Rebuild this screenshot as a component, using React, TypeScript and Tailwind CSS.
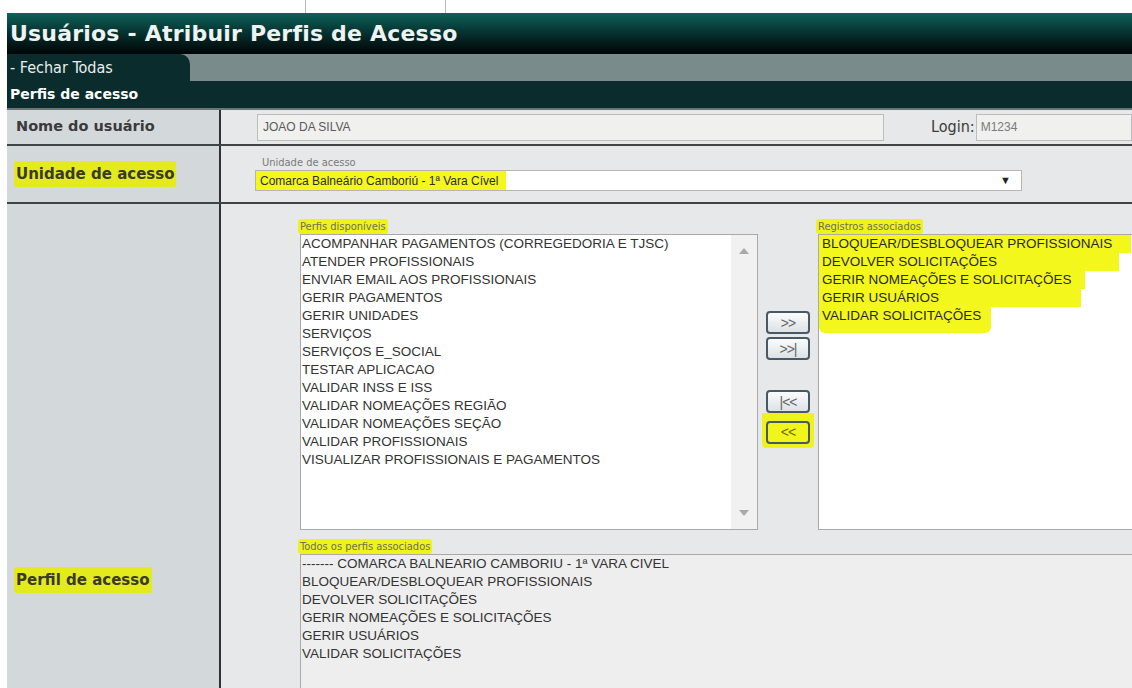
import React from "react";

const disponiveis = [
  "ACOMPANHAR PAGAMENTOS (CORREGEDORIA E TJSC)",
  "ATENDER PROFISSIONAIS",
  "ENVIAR EMAIL AOS PROFISSIONAIS",
  "GERIR PAGAMENTOS",
  "GERIR UNIDADES",
  "SERVIÇOS",
  "SERVIÇOS E_SOCIAL",
  "TESTAR APLICACAO",
  "VALIDAR INSS E ISS",
  "VALIDAR NOMEAÇÕES REGIÃO",
  "VALIDAR NOMEAÇÕES SEÇÃO",
  "VALIDAR PROFISSIONAIS",
  "VISUALIZAR PROFISSIONAIS E PAGAMENTOS",
];

// marker stroke width behind each associated entry
const associados = [
  { nome: "BLOQUEAR/DESBLOQUEAR PROFISSIONAIS", w: "w-[312px]" },
  { nome: "DEVOLVER SOLICITAÇÕES", w: "w-[300px]" },
  { nome: "GERIR NOMEAÇÕES E SOLICITAÇÕES", w: "w-[266px]" },
  { nome: "GERIR USUÁRIOS", w: "w-[262px]" },
  { nome: "VALIDAR SOLICITAÇÕES", w: "w-[172px]" },
];

const todos = [
  "------- COMARCA BALNEARIO CAMBORIU - 1ª VARA CIVEL",
  ...associados.map((a) => a.nome),
];

const cond = "font-['DejaVu_Sans_Condensed','DejaVu_Sans',sans-serif]";
const wide = "font-['DejaVu_Sans',sans-serif]";
const arial = "font-['Liberation_Sans',Arial,sans-serif]";

function Caption({ children }: { children: React.ReactNode }) {
  return (
    <div className={`${cond} text-[11px] leading-[15px] text-[#6f6f5a] bg-[#eef31c] rounded-[3px] px-[2px] -ml-[2px] w-fit`}>
      {children}
    </div>
  );
}

function Arrow({ up }: { up?: boolean }) {
  return (
    <svg width="10" height="6" viewBox="0 0 10 6" className="fill-[#a9a9a9]">
      {up ? <path d="M5 0L10 6H0z" /> : <path d="M0 0h10L5 6z" />}
    </svg>
  );
}

function MoveButton({ label, active }: { label: string; active?: boolean }) {
  return (
    <button
      type="button"
      className={`${arial} w-[44px] h-[23px] rounded-[4px] border-2 border-[#475866] text-[14px] leading-none tracking-[-1px] ${
        active
          ? "bg-[#f2f51a] text-[#6b6b20]"
          : "bg-gradient-to-b from-[#fbfbfb] to-[#dde2e6] text-[#666]"
      }`}
    >
      {label}
    </button>
  );
}

export default function App() {
  return (
    <div className="w-[1132px] h-[688px] overflow-hidden bg-white">
      {/* faint strip above the page header */}
      <div className="h-[13px] flex">
        <div className="w-[306px] border-r border-[#b8b8b8]" />
        <div className="w-[140px] border-r border-[#b8b8b8]" />
      </div>

      <div className="ml-[7px]">
        <div className="h-[41px] flex items-center pl-[3px] bg-gradient-to-b from-[#0e625b] via-[#06302e] to-[#010606]">
          <h1 className={`${wide} text-[22px] font-bold text-[#eef3f2] tracking-[0.2px]`}>
            Usuários - Atribuir Perfis de Acesso
          </h1>
        </div>

        <div className="h-[27px] flex bg-[#798b8b]">
          <div className={`${cond} w-[183px] rounded-tr-[10px] bg-[#0b2c2c] flex items-center pl-[3px] text-[16px] text-[#e9efee]`}>
            - Fechar Todas
          </div>
        </div>

        <div className={`${wide} h-[27px] flex items-center pl-[3px] bg-[#0b2c2c] text-[14px] font-bold text-white`}>
          Perfis de acesso
        </div>
        <div className="h-[2px] bg-[#6e7374]" />

        {/* Nome do usuário */}
        <div className="flex h-[36px] border-b-2 border-[#3e4344]">
          <div className={`${wide} w-[212px] shrink-0 bg-[#d3d8db] flex items-center pl-[9px] text-[14.5px] font-bold text-[#3a3a3a]`}>
            Nome do usuário
          </div>
          <div className="w-[2px] shrink-0 bg-[#2f3334]" />
          <div className="flex-1 bg-[#e6e8e9] flex items-center pl-[36px]">
            <div className={`${arial} w-[627px] shrink-0 h-[27px] border border-[#bdbdbd] bg-[#f0f0ee] flex items-center pl-[5px] text-[12px] text-[#5a5a5a]`}>
              JOAO DA SILVA
            </div>
            <span className={`${cond} ml-[47px] text-[16px] text-[#3a3a3a]`}>Login:</span>
            <div className={`${arial} ml-[1px] flex-1 h-[27px] border border-[#bdbdbd] bg-[#f0f0ee] flex items-center pl-[4px] text-[12px] text-[#7a7a7a]`}>
              M1234
            </div>
          </div>
        </div>

        {/* Unidade de acesso */}
        <div className="flex h-[58px] border-b-2 border-[#3e4344]">
          <div className="w-[212px] shrink-0 bg-[#d3d8db] flex items-center pl-[7px]">
            <span className={`${wide} text-[15px] font-bold text-[#3a3a2a] bg-[#e3ea1e] px-[2px] py-[2px] rounded-[2px]`}>
              Unidade de acesso
            </span>
          </div>
          <div className="w-[2px] shrink-0 bg-[#2f3334]" />
          <div className="flex-1 bg-[#e6e8e9] pl-[34px] pt-[10px]">
            <div className={`${cond} text-[11px] leading-[14px] text-[#7a7a7a] pl-[7px]`}>Unidade de acesso</div>
            <div className="w-[767px] h-[21px] border border-[#b5b5b5] bg-white flex items-center justify-between pr-[10px]">
              <span className={`${arial} text-[12px] text-[#2c2c2c] bg-[#f4f71c] pl-[4px] pr-[8px] h-full flex items-center`}>
                Comarca Balneário Camboriú - 1ª Vara Cível
              </span>
              <span className="text-[11px] text-[#222]">▼</span>
            </div>
          </div>
        </div>

        {/* Perfil de acesso */}
        <div className="flex h-[752px]">
          <div className="w-[212px] shrink-0 bg-[#d3d8db] flex items-center pl-[7px]">
            <span className={`${wide} text-[15px] font-bold text-[#3a3a2a] bg-[#e3ea1e] px-[2px] py-[2px] rounded-[2px]`}>
              Perfil de acesso
            </span>
          </div>
          <div className="w-[2px] shrink-0 bg-[#2f3334]" />
          <div className="flex-1 bg-[#e6e8e9] pl-[79px] pt-[15px]">
            <div className="flex">
              <div className="w-[458px] shrink-0">
                <Caption>Perfis disponíveis</Caption>
                <div className="h-[296px] border border-[#a9a9a9] bg-white flex">
                  <ul className={`${arial} flex-1 text-[13.5px] leading-[18px] text-[#333] pl-[1px]`}>
                    {disponiveis.map((p) => (
                      <li key={p}>{p}</li>
                    ))}
                  </ul>
                  <div className="w-[26px] bg-[#f1f1f1] flex flex-col items-center justify-between py-[13px]">
                    <Arrow up />
                    <Arrow />
                  </div>
                </div>
              </div>

              <div className="w-[60px] shrink-0 flex flex-col items-center pt-[92px]">
                <MoveButton label=">>" />
                <div className="h-[3px]" />
                <MoveButton label=">>|" />
                <div className="h-[30px]" />
                <MoveButton label="|<<" />
                <div className="h-[6px] w-[52px] bg-[#eef31c]" />
                <div className="bg-[#eef31c] px-[4px] pb-[4px] rounded-b-[4px]">
                  <MoveButton label="<<" active />
                </div>
              </div>

              <div className="w-[340px] shrink-0">
                <Caption>Registros associados</Caption>
                <div className="h-[296px] border border-[#a9a9a9] bg-white">
                  <ul className={`${arial} text-[13.5px] leading-[18px] text-[#2a2a2a]`}>
                    {associados.map((a, i) => (
                      <li key={a.nome}>
                        <span
                          className={`bg-[#f4f71c] pl-[3px] inline-block ${a.w} ${
                            i === associados.length - 1 ? "pb-[8px] rounded-b-[6px]" : ""
                          }`}
                        >
                          {a.nome}
                        </span>
                      </li>
                    ))}
                  </ul>
                </div>
              </div>
            </div>

            <div className="mt-[9px] w-[860px]">
              <Caption>Todos os perfis associados</Caption>
              <div className="h-[300px] border-t border-l border-[#a9a9a9] bg-[#eeeeee]">
                <ul className={`${arial} text-[13.5px] leading-[18px] text-[#333] pl-[1px]`}>
                  {todos.map((p) => (
                    <li key={p}>{p}</li>
                  ))}
                </ul>
              </div>
            </div>
          </div>
        </div>
      </div>
    </div>
  );
}
